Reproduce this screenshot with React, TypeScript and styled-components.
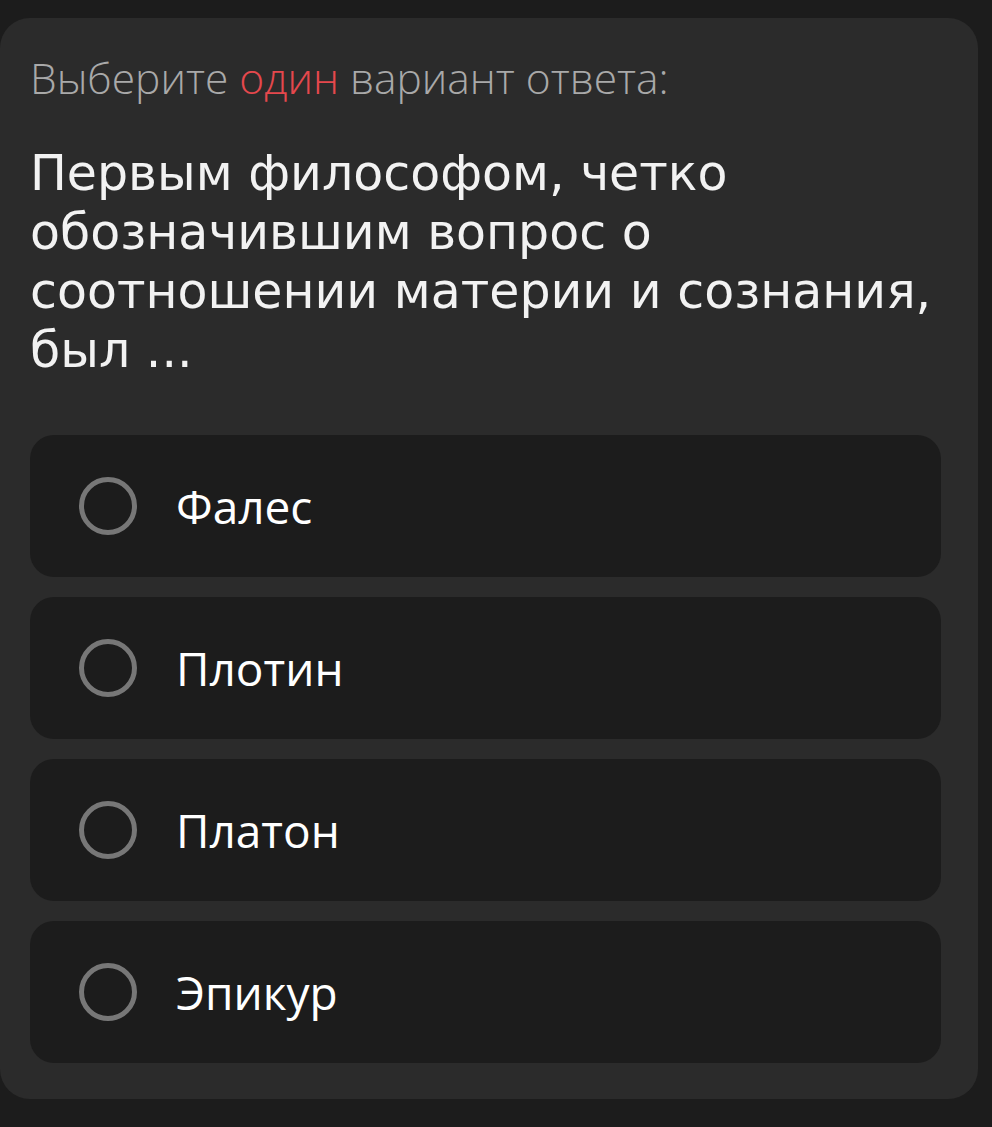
import styled, { createGlobalStyle } from "styled-components";

const options = ["Фалес", "Плотин", "Платон", "Эпикур"];

const App = () => {
    return (
        <>
            <GlobalStyle />
            <Card>
                <Hint>
                    Выберите <Accent>один</Accent> вариант ответа:
                </Hint>
                <Question>
                    Первым философом, четко обозначившим вопрос о соотношении материи и сознания, был ...
                </Question>
                <OptionList>
                    {options.map((name) => (
                        <Option key={name}>
                            <Radio />
                            <OptionText>{name}</OptionText>
                        </Option>
                    ))}
                </OptionList>
            </Card>
        </>
    );
};

export default App;

// styled-component

const GlobalStyle = createGlobalStyle`
    html, body {
        margin: 0;
        padding: 0;
        background-color: #1c1c1c;
        height: 100%;
    }
    * {
        box-sizing: border-box;
    }
`;

const Card = styled.div`
    width: 978px;
    margin-top: 18px;
    padding: 30px 37px 36px 30px;
    background-color: #2b2b2b;
    border-radius: 30px;
`;

const Hint = styled.div`
    font-family: "Open Sans", sans-serif;
    font-weight: 300;
    font-size: 42.5px;
    line-height: 60px;
    color: #a9a9a9;
`;

const Accent = styled.span`
    color: #e5484d;
`;

const Question = styled.div`
    margin-top: 36px;
    margin-right: -30px;
    font-family: "DejaVu Sans", sans-serif;
    font-weight: 500;
    font-size: 49px;
    line-height: 59px;
    color: #f2f2f2;
`;

const OptionList = styled.div`
    display: flex;
    flex-direction: column;
    gap: 20px;
    margin-top: 55px;
`;

const Option = styled.div`
    display: flex;
    align-items: center;
    height: 142px;
    padding-left: 49px;
    background-color: #1c1c1c;
    border-radius: 24px;
`;

const Radio = styled.span`
    width: 58px;
    height: 58px;
    border: 5px solid #777777;
    border-radius: 50%;
    flex-shrink: 0;
`;

const OptionText = styled.span`
    margin-left: 39px;
    font-family: "Open Sans", sans-serif;
    font-weight: 400;
    font-size: 46px;
    color: #ffffff;
`;
